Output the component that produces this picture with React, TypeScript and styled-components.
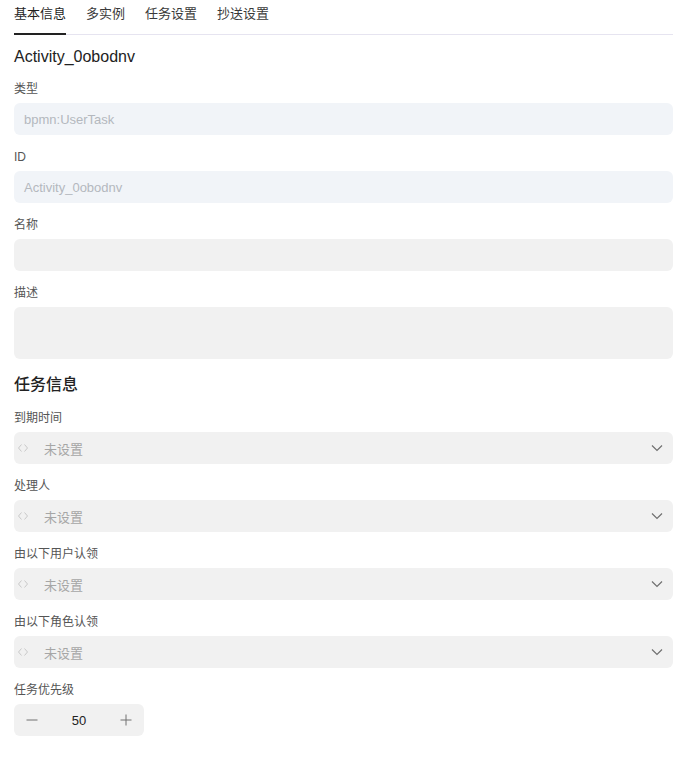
import React from "react";
import styled, { createGlobalStyle } from "styled-components";

const GlobalStyle = createGlobalStyle`
  html, body {
    margin: 0;
    padding: 0;
    background: #ffffff;
  }
  body {
    font-family: "Liberation Sans", "Noto Sans CJK SC", sans-serif;
    color: #222222;
  }
`;

const Panel = styled.div`
  width: 659px;
  padding: 0 17px 0 14px;
`;

const TabBar = styled.div`
  display: flex;
  gap: 20px;
  height: 35px;
  border-bottom: 1px solid #e6e4f0;
  box-sizing: border-box;
`;

const Tab = styled.div<{ $active?: boolean }>`
  font-size: 13px;
  line-height: 28px;
  color: ${({ $active }) => ($active ? "#1f1f1f" : "#3a3a3a")};
  border-bottom: 2px solid
    ${({ $active }) => ($active ? "#222222" : "transparent")};
  margin-bottom: -1px;
  box-sizing: border-box;
  height: 35px;
`;

const Title = styled.div`
  font-size: 16px;
  line-height: 20px;
  color: #222222;
  margin-top: 12px;
  margin-bottom: 12px;
`;

const Heading = styled.div`
  font-size: 16px;
  line-height: 20px;
  font-weight: 500;
  color: #222222;
  margin-top: 16px;
  margin-bottom: 13px;
`;

const Field = styled.div`
  display: flex;
  flex-direction: column;
  gap: 4px;
  margin-bottom: 12px;
`;

const Label = styled.div`
  font-size: 12px;
  line-height: 20px;
  color: #555555;
`;

const Input = styled.div<{ $disabled?: boolean; $tall?: boolean }>`
  height: ${({ $tall }) => ($tall ? "52px" : "32px")};
  border-radius: 6px;
  background: ${({ $disabled }) => ($disabled ? "#f1f4f8" : "#f1f1f1")};
  padding: 0 10px;
  display: flex;
  align-items: center;
  font-size: 13px;
  color: #b4b8be;
  box-sizing: border-box;
`;

const Select = styled.div`
  height: 32px;
  border-radius: 6px;
  background: #f1f1f1;
  display: flex;
  align-items: center;
  padding: 0 9px 0 3px;
  box-sizing: border-box;
`;

const ExprIcon = styled.span`
  width: 12px;
  display: flex;
  align-items: center;
  color: #c9c9c9;
  margin-right: 15px;
`;

const Placeholder = styled.span`
  flex: 1;
  font-size: 13px;
  color: #a6a6a6;
`;

const Chevron = styled.span`
  display: flex;
  color: #707070;
`;

const Stepper = styled.div`
  width: 130px;
  height: 32px;
  border-radius: 6px;
  background: #f1f1f1;
  display: flex;
  align-items: center;
  justify-content: space-between;
  padding: 0 8px;
  box-sizing: border-box;
`;

const StepButton = styled.span`
  width: 20px;
  display: flex;
  justify-content: center;
  color: #707070;
`;

const StepValue = styled.span`
  font-size: 13px;
  color: #222222;
`;

const tabs = ["基本信息", "多实例", "任务设置", "抄送设置"];

const CodeIcon = () => (
  <svg width="12" height="10" viewBox="0 0 12 10" fill="none" stroke="currentColor" strokeWidth="1">
    <path d="M4.5 1.5 1.5 5l3 3.5M7.5 1.5l3 3.5-3 3.5" />
  </svg>
);

const ChevronDown = () => (
  <svg width="14" height="14" viewBox="0 0 14 14" fill="none" stroke="currentColor" strokeWidth="1.2">
    <path d="M2 4.5 7 9.5l5-5" />
  </svg>
);

const Minus = () => (
  <svg width="12" height="12" viewBox="0 0 12 12" stroke="currentColor" strokeWidth="1">
    <path d="M0.5 6h11" />
  </svg>
);

const Plus = () => (
  <svg width="12" height="12" viewBox="0 0 12 12" stroke="currentColor" strokeWidth="1">
    <path d="M0.5 6h11M6 0.5v11" />
  </svg>
);

const SelectField = ({ label }: { label: string }) => (
  <Field>
    <Label>{label}</Label>
    <Select>
      <ExprIcon>
        <CodeIcon />
      </ExprIcon>
      <Placeholder>未设置</Placeholder>
      <Chevron>
        <ChevronDown />
      </Chevron>
    </Select>
  </Field>
);

const App: React.FC = () => {
  return (
    <>
      <GlobalStyle />
      <Panel>
        <TabBar>
          {tabs.map((t, i) => (
            <Tab key={t} $active={i === 0}>
              {t}
            </Tab>
          ))}
        </TabBar>
        <Title>Activity_0obodnv</Title>
        <Field>
          <Label>类型</Label>
          <Input $disabled>bpmn:UserTask</Input>
        </Field>
        <Field>
          <Label>ID</Label>
          <Input $disabled>Activity_0obodnv</Input>
        </Field>
        <Field>
          <Label>名称</Label>
          <Input />
        </Field>
        <Field>
          <Label>描述</Label>
          <Input $tall />
        </Field>
        <Heading>任务信息</Heading>
        <SelectField label="到期时间" />
        <SelectField label="处理人" />
        <SelectField label="由以下用户认领" />
        <SelectField label="由以下角色认领" />
        <Field>
          <Label>任务优先级</Label>
          <Stepper>
            <StepButton>
              <Minus />
            </StepButton>
            <StepValue>50</StepValue>
            <StepButton>
              <Plus />
            </StepButton>
          </Stepper>
        </Field>
      </Panel>
    </>
  );
};

export default App;
